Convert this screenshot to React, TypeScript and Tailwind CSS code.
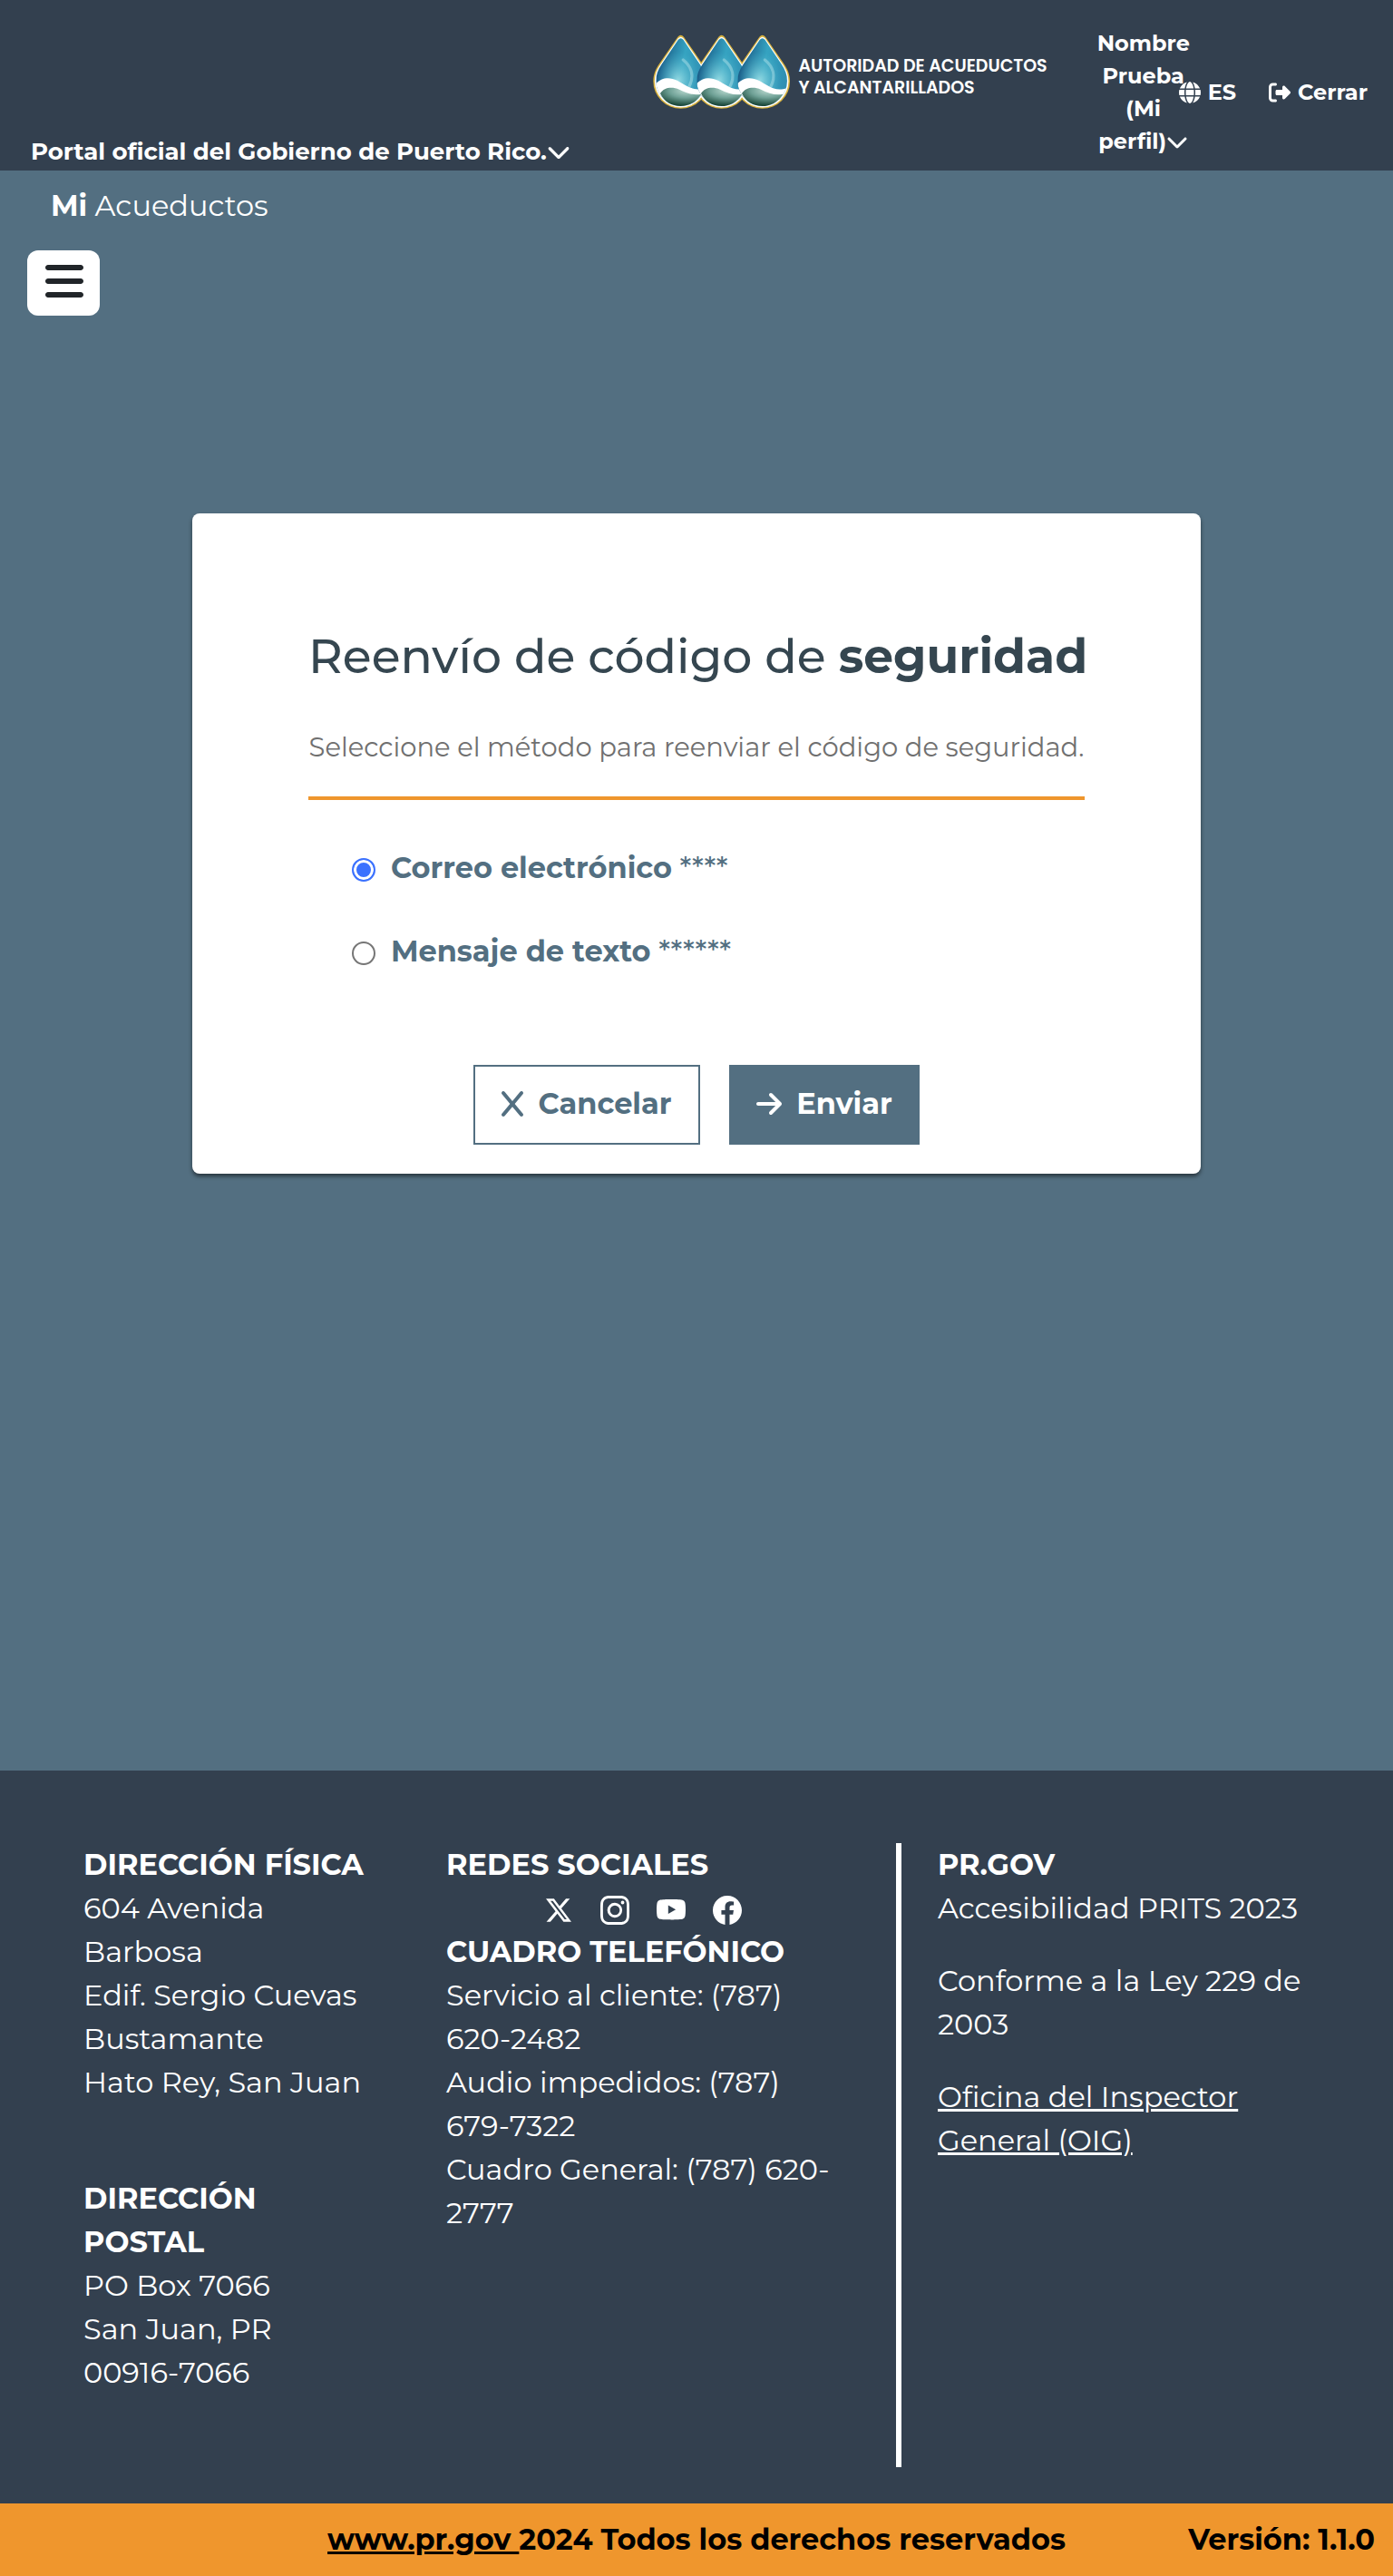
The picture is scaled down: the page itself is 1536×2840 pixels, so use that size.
import { useState } from "react";
import {
  FaArrowRight,
  FaBars,
  FaChevronDown,
  FaGlobe,
  FaRightFromBracket,
  FaX,
} from "react-icons/fa6";
import { BsFacebook, BsInstagram, BsTwitterX, BsYoutube } from "react-icons/bs";

const DROP =
  "M-10 8Q0 -4 10 8L70 95C84 115 91 133 91 155A91 90 0 0 1 -91 155C-91 133 -84 115 -70 95Z";

function DropsLogo() {
  const centers = [92, 227, 362];
  return (
    <svg viewBox="0 0 456 246" className="h-[82px] w-[152px] shrink-0" aria-hidden="true">
      <defs>
        <linearGradient id="water" x1="0" y1="0" x2="1" y2="0.25">
          <stop offset="0" stopColor="#12335f" />
          <stop offset="0.22" stopColor="#1b5f8a" />
          <stop offset="0.6" stopColor="#35a3c1" />
          <stop offset="1" stopColor="#2f8fb3" />
        </linearGradient>
        <radialGradient id="glow" cx="0.45" cy="0.62" r="0.4">
          <stop offset="0" stopColor="#9fe0e6" stopOpacity="0.9" />
          <stop offset="1" stopColor="#4cb8cf" stopOpacity="0" />
        </radialGradient>
        <radialGradient id="land" cx="0.62" cy="0.15" r="0.8">
          <stop offset="0" stopColor="#b9d9d0" />
          <stop offset="0.5" stopColor="#6fa196" />
          <stop offset="1" stopColor="#1d4a3c" />
        </radialGradient>
        <clipPath id="inner">
          <path d={DROP} transform="translate(0 11) scale(0.9 0.92)" />
        </clipPath>
      </defs>
      {centers.map((x) => (
        <path key={x} d={DROP} fill="#d9b33f" transform={`translate(${x} 0)`} />
      ))}
      {centers.map((x) => (
        <path key={x} d={DROP} fill="#fff" transform={`translate(${x} 6) scale(0.95 0.96)`} />
      ))}
      {centers.map((x) => (
        <g key={x} transform={`translate(${x} 0)`}>
          <g clipPath="url(#inner)">
            <path d={DROP} fill="url(#water)" />
            <path d={DROP} fill="url(#glow)" />
            <path
              d="M8 84C38 108 44 140 28 172"
              fill="none"
              stroke="#c8eef0"
              strokeOpacity="0.4"
              strokeWidth="10"
              strokeLinecap="round"
            />
            <path
              d="M-92 178C-75 142 -40 138 -12 152C18 167 40 192 84 176V246H-92Z"
              fill="#fff"
            />
          </g>
          <path
            d="M-68 195C-55 175 -30 172 -5 182C20 194 45 203 68 197C52 225 25 237 0 237C-30 237 -55 222 -68 195Z"
            fill="url(#land)"
          />
        </g>
      ))}
    </svg>
  );
}

function Header() {
  return (
    <header className="flex min-h-[188px] items-start justify-between bg-[#33404f] pr-7 pl-[34px] text-white">
      <button type="button" className="mt-[149px] flex items-center text-[26px] leading-[36px] font-bold whitespace-nowrap">
        Portal oficial del Gobierno de Puerto Rico.
        <FaChevronDown className="size-[26px]" />
      </button>
      <div className="flex items-start">
        <a href="#inicio" className="mt-[38px] mr-[55px] flex items-center gap-2 font-['Poppins','Montserrat','Inter',sans-serif] text-[19px] leading-6 font-semibold">
          <DropsLogo />
          <span className="pt-3 whitespace-nowrap">
            AUTORIDAD DE ACUEDUCTOS
            <br />Y ALCANTARILLADOS
          </span>
        </a>
        <button type="button" className="mt-[30px] -mr-3 w-[102px] text-center text-[24px] leading-[36px] font-bold">
          Nombre
          <br />
          Prueba
          <br />
          (Mi
          <br />
          <span className="flex items-center justify-center">
            perfil)
            <FaChevronDown className="size-6 shrink-0" />
          </span>
        </button>
        <button type="button" className="mt-[84px] mr-9 flex items-center gap-2 text-[24px] leading-[36px] font-bold">
          <FaGlobe className="size-6" />
          ES
        </button>
        <a href="#cerrar" className="mt-[84px] flex items-center gap-2 text-[24px] leading-[36px] font-bold">
          <FaRightFromBracket className="size-6" />
          Cerrar
        </a>
      </div>
    </header>
  );
}

function ResendCard() {
  const [method, setMethod] = useState("email");
  const options = [
    { id: "email", label: "Correo electrónico", mask: "****" },
    { id: "sms", label: "Mensaje de texto", mask: "******" },
  ];
  return (
    <form
      onSubmit={(e) => e.preventDefault()}
      className="mx-[212px] mt-[218px] rounded-lg bg-white px-32 pt-[120px] pb-8 text-[32px] leading-[48px] text-[#536f81] shadow-[0_3px_4px_rgba(0,0,0,0.5)]"
    >
      <h1 className="text-center text-[52px] leading-[76px] font-medium whitespace-nowrap text-[#354650]">
        Reenvío de código de <strong className="font-bold">seguridad</strong>
      </h1>
      <p className="mt-[41px] text-center text-[29px] leading-[42px] whitespace-nowrap text-[#707070]">
        Seleccione el método para reenviar el código de seguridad.
      </p>
      <hr className="mt-[33px] border-t-4 border-[#ef962d]" />
      <fieldset aria-label="Método de reenvío" className="mt-[51px] ml-12 flex flex-col gap-11">
        {options.map((o) => (
          <label key={o.id} className="flex items-center">
            <input
              type="radio"
              name="metodo"
              checked={method === o.id}
              onChange={() => setMethod(o.id)}
              className="mt-1 mr-[17px] size-[26px] appearance-none rounded-full border-2 border-[#767676] checked:border-[#3b71fe] checked:bg-[#3b71fe] checked:shadow-[inset_0_0_0_3px_white]"
            />
            <span className="font-medium">
              <strong className="font-bold">{o.label}</strong> {o.mask}
            </span>
          </label>
        ))}
      </fieldset>
      <div className="mt-[101px] flex justify-center gap-8 font-bold">
        <button type="button" className="flex h-[88px] w-[250px] items-center justify-center gap-4 border-2 border-[#536f81] pb-0.5">
          <FaX className="h-8 w-6" />
          Cancelar
        </button>
        <button type="submit" className="flex h-[88px] w-[210px] items-center justify-center gap-4 bg-[#536f81] pb-0.5 text-white">
          <FaArrowRight className="h-8 w-7" />
          Enviar
        </button>
      </div>
    </form>
  );
}

function Footer() {
  return (
    <footer className="text-[32px] leading-[48px]">
      <div className="bg-[#33404f] px-[92px] pt-20 pb-10 text-white">
        <div className="flex">
          <div className="w-[400px] shrink-0">
            <h2 className="font-bold">DIRECCIÓN FÍSICA</h2>
            <address className="not-italic">
              604 Avenida
              <br />
              Barbosa
              <br />
              Edif. Sergio Cuevas
              <br />
              Bustamante
              <br />
              Hato Rey, San Juan
            </address>
            <h2 className="mt-20 font-bold">
              DIRECCIÓN
              <br />
              POSTAL
            </h2>
            <address className="mb-20 not-italic">
              PO Box 7066
              <br />
              San Juan, PR
              <br />
              00916-7066
            </address>
          </div>
          <div className="w-[496px] shrink-0 pr-[60px]">
            <h2 className="font-bold">REDES SOCIALES</h2>
            <div className="flex h-12 items-center justify-center gap-[30px] pt-1 pr-0.5">
              <a href="#x" aria-label="X" className="flex w-8 justify-center">
                <BsTwitterX className="size-7" />
              </a>
              <a href="#instagram" aria-label="Instagram">
                <BsInstagram className="size-8" />
              </a>
              <a href="#youtube" aria-label="YouTube">
                <BsYoutube className="size-8" />
              </a>
              <a href="#facebook" aria-label="Facebook">
                <BsFacebook className="size-8" />
              </a>
            </div>
            <h2 className="font-bold">CUADRO TELEFÓNICO</h2>
            <p>
              Servicio al cliente: (787)
              <br />
              620-2482
            </p>
            <p>
              Audio impedidos: (787)
              <br />
              679-7322
            </p>
            <p className="whitespace-nowrap">
              Cuadro General: (787) 620-
              <br />
              2777
            </p>
          </div>
          <div className="flex-1 border-l-[6px] border-white pl-10">
            <h2 className="font-bold">PR.GOV</h2>
            <p className="whitespace-nowrap">Accesibilidad PRITS 2023</p>
            <p className="mt-8 whitespace-nowrap">
              Conforme a la Ley 229 de
              <br />
              2003
            </p>
            <a href="#oig" className="mt-8 block underline">
              Oficina del Inspector
              <br />
              General (OIG)
            </a>
          </div>
        </div>
      </div>
      <div className="relative flex justify-center bg-[#ef962d] py-4 font-bold text-black">
        <p className="whitespace-nowrap">
          <a href="#prgov" className="underline">www.pr.gov </a>
          2024 Todos los derechos reservados
        </p>
        <p className="absolute right-5">Versión: 1.1.0</p>
      </div>
    </footer>
  );
}

export default function App() {
  return (
    <div className="font-['Montserrat','Inter',sans-serif]">
      <Header />
      <main className="bg-[#536f81] pb-[658px]">
        <p className="pt-[15px] pl-14 text-[32px] leading-[48px] text-white">
          <strong>Mi</strong> Acueductos
        </p>
        <button
          type="button"
          aria-label="Menú"
          className="mt-[25px] ml-[30px] flex h-[72px] w-20 items-center justify-center rounded-xl bg-white pb-1 pl-0.5 text-[#212529]"
        >
          <FaBars className="size-12" />
        </button>
        <ResendCard />
      </main>
      <Footer />
    </div>
  );
}
